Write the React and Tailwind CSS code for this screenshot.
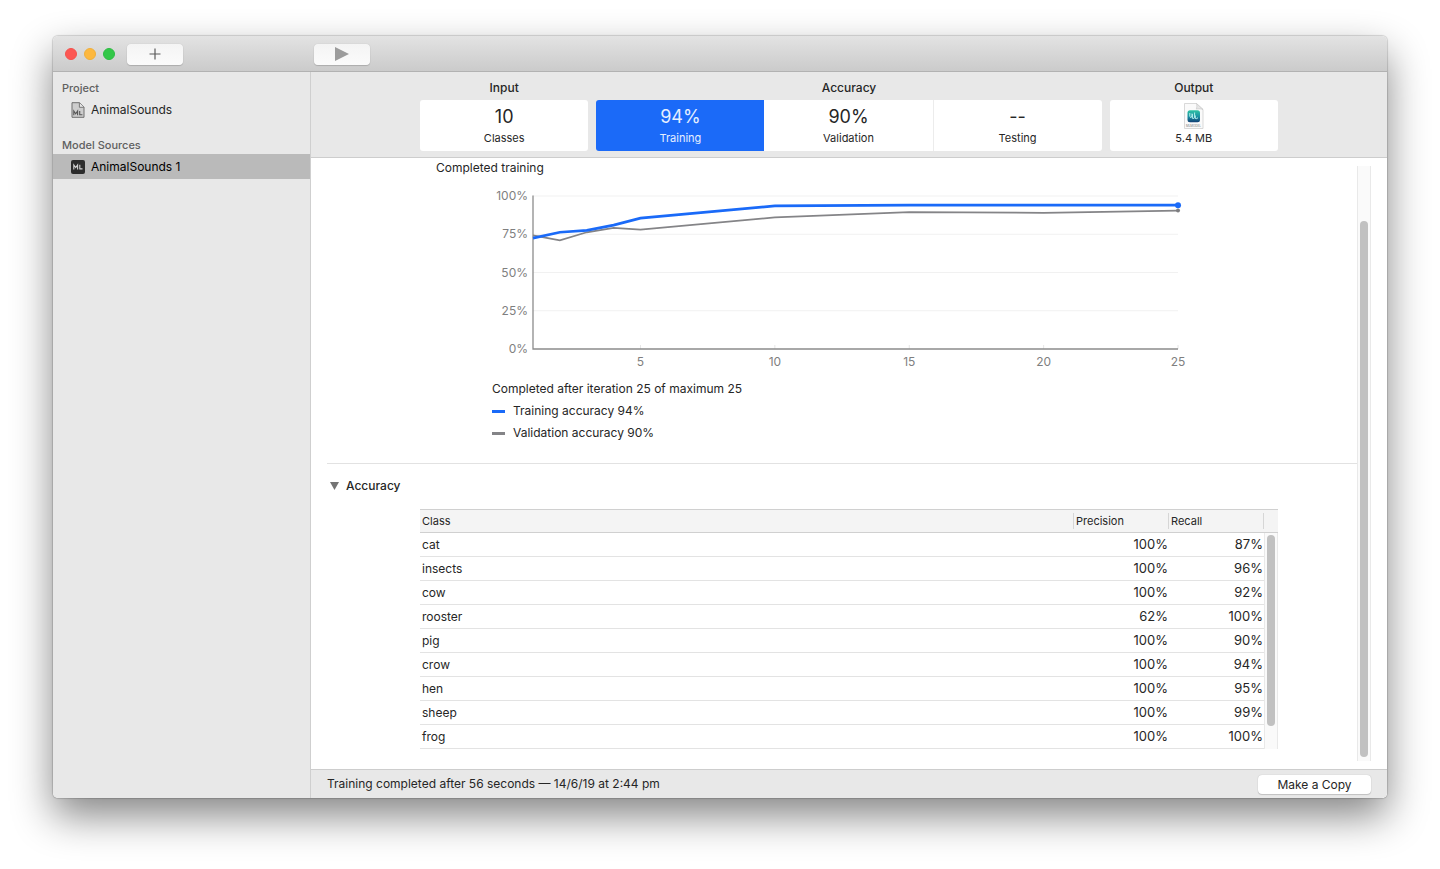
import React, { useState } from "react";

const trainingData = [
  [1, 72.5],
  [2, 76.3],
  [3, 77.5],
  [4, 81],
  [5, 85.5],
  [10, 93.5],
  [15, 94],
  [20, 94],
  [25, 94],
];

const validationData = [
  [1, 74.3],
  [2, 71],
  [3, 76.3],
  [4, 79.2],
  [5, 78],
  [10, 86],
  [15, 89.5],
  [20, 89],
  [25, 90.5],
];

const classes = [
  { name: "cat", precision: "100%", recall: "87%" },
  { name: "insects", precision: "100%", recall: "96%" },
  { name: "cow", precision: "100%", recall: "92%" },
  { name: "rooster", precision: "62%", recall: "100%" },
  { name: "pig", precision: "100%", recall: "90%" },
  { name: "crow", precision: "100%", recall: "94%" },
  { name: "hen", precision: "100%", recall: "95%" },
  { name: "sheep", precision: "100%", recall: "99%" },
  { name: "frog", precision: "100%", recall: "100%" },
];

const chartX = (i) => 41 + ((i - 1) * 645) / 24;
const chartY = (v) => 161 - (v * 153) / 100;
const toPoints = (data) => data.map(([i, v]) => `${chartX(i)},${chartY(v)}`).join(" ");

const DocumentIcon = () => (
  <svg className="h-4 w-[14px] shrink-0" viewBox="0 0 14 16" aria-hidden="true">
    <path d="M1 .7h7.6L13 5.1v10.2H1z" fill="#cdcdcd" stroke="#6e6e6e" strokeWidth="1" strokeLinejoin="round" />
    <path d="M8.4.8v4.5h4.5" fill="#e6e6e6" stroke="#6e6e6e" strokeWidth=".9" />
    <path d="M2.8 13.2V9l1.9 2.7L6.6 9v4.2M8.7 9v3.8h2.7" fill="none" stroke="#555" strokeWidth="1.1" />
  </svg>
);

const SourceIcon = () => (
  <svg className="h-[14px] w-[14px] shrink-0" viewBox="0 0 14 14" aria-hidden="true">
    <rect width="14" height="14" rx="2" fill="#2c2c2c" />
    <path d="M2.8 9.4V5l1.9 2.6L6.6 5v4.4M8.8 4.8v4.1h2.7" fill="none" stroke="#d2d2d2" strokeWidth="1.1" />
  </svg>
);

const ModelFileIcon = () => (
  <svg className="h-[26px] w-5" viewBox="0 0 20 26" aria-hidden="true">
    <defs>
      <linearGradient id="tile" x1="0" y1="0" x2="0" y2="1">
        <stop offset="0" stopColor="#2fc4a4" />
        <stop offset=".55" stopColor="#1b8fa3" />
        <stop offset="1" stopColor="#123f74" />
      </linearGradient>
    </defs>
    <path d="M.5 .5h12l6.5 6v19H.5z" fill="#fafafa" stroke="#cfcfcf" strokeWidth=".8" />
    <path d="M12.5.5c.6 2 .3 4-.2 5.6 2-.5 4.7-.4 6.7.4z" fill="#e6e6e6" stroke="#c4c4c4" strokeWidth=".6" />
    <rect x="3.5" y="7.2" width="12.5" height="12" rx="2.5" fill="url(#tile)" />
    <path d="M5.8 10v3.5q1.2 2.5 2.2-.5V10.5M8.4 11v4.3q1.6 1.2 2.2-1.3V9.5M11.3 12.5v3q1.5.6 2.7-.8" fill="none" stroke="#b5f2ec" strokeWidth="1" />
    <text x="9.500" y="24" textAnchor="middle" fontSize="3" fill="#777">MLMODEL</text>
  </svg>
);

const Metric = ({ value, label, className }) => (
  <button type="button" className={`flex h-[51px] flex-1 flex-col items-center pt-[5px] ${className}`}>
    <span className="h-[25px] text-lg leading-6">{value}</span>
    <span className="text-[11px] leading-4">{label}</span>
  </button>
);

const AccuracyChart = () => (
  <svg className="block w-full" viewBox="0 0 700 182" role="img" aria-label="Accuracy by iteration">
    {[25, 50, 75, 100].map((v) => (
      <line key={v} x1="41" x2="686" y1={chartY(v)} y2={chartY(v)} stroke="#f1f1f1" />
    ))}
    {[5, 10, 15, 20, 25].map((i) => (
      <line key={i} x1={chartX(i)} x2={chartX(i)} y1="157" y2="161" stroke="#e6e6e6" />
    ))}
    <path d="M41 7.5V161H686" fill="none" stroke="#8c8c8c" strokeWidth="1.3" />
    <polyline points={toPoints(validationData)} fill="none" stroke="#848487" strokeWidth="1.8" />
    <circle cx={chartX(25)} cy={chartY(90.5)} r="2" fill="#7d7d80" />
    <polyline points={toPoints(trainingData)} fill="none" stroke="#1a6af8" strokeWidth="2.7" />
    <circle cx={chartX(25)} cy={chartY(94)} r="3" fill="#1a6af8" />
    <g fontSize="12" fill="#7f7f7f">
      {[0, 25, 50, 75, 100].map((v) => (
        <text key={v} x="36" y={chartY(v) + 4} textAnchor="end">{`${v}%`}</text>
      ))}
      {[5, 10, 15, 20, 25].map((i) => (
        <text key={i} x={chartX(i)} y="178" textAnchor="middle">{i}</text>
      ))}
    </g>
  </svg>
);

const Scrollbar = ({ thumb }) => (
  <div className="flex w-[14px] flex-1 justify-center border-x border-[#e9e9e9] bg-[#fafafa]">
    <div className={`w-2 rounded-full bg-[#c1c1c1] ${thumb}`} />
  </div>
);

const ClassTable = () => (
  <div className="flex">
    <table className="flex-1 table-fixed border-collapse text-left">
      <thead>
        <tr className="h-[23px] border-y border-[#d0d0d0] bg-[#f4f4f4] text-[11px]">
          <th className="p-0 pl-[2px] font-normal">Class</th>
          <th className="w-[95px] p-0 font-normal">
            <div className="border-l border-[#d6d6d6] pl-[2px] leading-4">Precision</div>
          </th>
          <th className="w-24 p-0 font-normal">
            <div className="border-x border-[#d6d6d6] pl-[2px] leading-4">Recall</div>
          </th>
        </tr>
      </thead>
      <tbody className="text-[13px]">
        {classes.map((row) => (
          <tr key={row.name} className="h-6 border-b border-[#e3e3e3]">
            <td className="p-0 pl-[2px] text-xs">{row.name}</td>
            <td className="p-0 text-right">{row.precision}</td>
            <td className="p-0 pr-px text-right">{row.recall}</td>
          </tr>
        ))}
      </tbody>
    </table>
    <div className="flex flex-col">
      <div className="h-6 border-y border-[#d0d0d0] bg-[#f4f4f4]" />
      <Scrollbar thumb="mt-[2px] mb-[23px]" />
    </div>
  </div>
);

const TitleBar = () => (
  <header className="flex h-9 shrink-0 items-center border-b border-[#b2b2b2] bg-gradient-to-b from-[#e3e3e3] to-[#cbcbcb] pt-px">
    <div className="flex w-[261px] shrink-0 items-center gap-[7px] pl-3">
      <button type="button" aria-label="Close" className="size-3 rounded-full border border-[#f4524d] bg-[#fc5753]" />
      <button type="button" aria-label="Minimize" className="size-3 rounded-full border border-[#f0af3a] bg-[#fdb83f]" />
      <button type="button" aria-label="Zoom" className="size-3 rounded-full border border-[#2dbd43] bg-[#33c748]" />
      <button
        type="button"
        aria-label="Add"
        className="ml-[5px] flex h-[21px] w-14 items-center justify-center rounded-[4px] bg-gradient-to-b from-[#f4f4f4] to-[#fbfbfb] shadow-[0_0_1px_rgba(0,0,0,0.2),0_1px_1px_rgba(0,0,0,0.15)]"
      >
        <svg className="size-3" viewBox="0 0 12 12" aria-hidden="true">
          <path d="M6 .5v11M.5 6h11" stroke="#5a5a5a" strokeWidth="1.2" />
        </svg>
      </button>
    </div>
    <button
      type="button"
      aria-label="Train"
      className="flex h-[21px] w-14 items-center justify-center rounded-[4px] bg-gradient-to-b from-[#f4f4f4] to-[#fbfbfb] shadow-[0_0_1px_rgba(0,0,0,0.2),0_1px_1px_rgba(0,0,0,0.15)]"
    >
      <svg className="size-[14px]" viewBox="0 0 14 14" aria-hidden="true">
        <path d="M0 0l14 7-14 7z" fill="#9c9c9c" />
      </svg>
    </button>
  </header>
);

const Sidebar = () => (
  <nav className="w-[258px] shrink-0 border-r border-[#cfcfcf] bg-[#e8e8e8] pt-2">
    <h2 className="mb-px pl-[9px] text-[11px] leading-4 font-medium text-[#606060]">Project</h2>
    <a href="#project" className="mb-[15px] flex h-[25px] items-center gap-[6px] pl-[18px]">
      <DocumentIcon />
      AnimalSounds
    </a>
    <h2 className="mb-px pl-[9px] text-[11px] leading-4 font-medium text-[#606060]">Model Sources</h2>
    <a href="#source" aria-current="page" className="flex h-[25px] items-center gap-[6px] bg-[#bababa] pl-[18px] text-black">
      <SourceIcon />
      AnimalSounds 1
    </a>
  </nav>
);

const Summary = () => (
  <section className="border-b border-[#cdcdcd] bg-[#e8e8e8] px-4 pt-2 pb-[6px]">
    <div className="mx-auto flex max-w-[858px] gap-2 text-center">
      <div className="flex-1">
        <h3 className="mb-1 leading-4 font-medium">Input</h3>
        <div className="flex">
          <Metric value="10" label="Classes" className="rounded-[3px] bg-white" />
        </div>
      </div>
      <div className="flex-[3]">
        <h3 className="mb-1 leading-4 font-medium">Accuracy</h3>
        <div className="flex overflow-hidden rounded-[3px]">
          <Metric value="94%" label="Training" className="bg-[#1b6af8] text-[#e6efff]" />
          <Metric value="90%" label="Validation" className="bg-white" />
          <Metric value="--" label="Testing" className="border-l border-[#ececec] bg-white" />
        </div>
      </div>
      <div className="flex-1">
        <h3 className="mb-1 leading-4 font-medium">Output</h3>
        <button type="button" className="flex h-[51px] w-full flex-col items-center rounded-[3px] bg-white pt-[3px]">
          <ModelFileIcon />
          <span className="mt-px text-[11px] leading-4">5.4 MB</span>
        </button>
      </div>
    </div>
  </section>
);

const App = () => {
  const [open, setOpen] = useState(true);

  return (
    <div className="flex min-h-screen flex-col bg-white px-[53px] pt-9 pb-[71px] font-['Inter','Liberation_Sans',sans-serif] text-xs text-[#262626]">
      <div className="flex flex-1 flex-col rounded-[5px] shadow-[0_0_1px_1px_rgba(0,0,0,0.15),0_18px_40px_rgba(0,0,0,0.48)]">
        <div className="flex flex-1 flex-col overflow-hidden rounded-[5px]">
          <TitleBar />
          <div className="flex flex-1">
            <Sidebar />
            <div className="flex min-w-0 flex-1 flex-col bg-white">
              <Summary />
              <main className="flex flex-1 px-4">
                <div className="min-w-0 flex-1">
                  <p className="pl-[109px] leading-5">Completed training</p>
                  <div className="mt-[10px] px-[165px]">
                    <AccuracyChart />
                    <div className="mt-2 leading-[22px]">
                      <p>Completed after iteration 25 of maximum 25</p>
                      <p className="flex items-center gap-2">
                        <span className="h-[3px] w-[13px] bg-[#1a6af8]" />
                        Training accuracy 94%
                      </p>
                      <p className="flex items-center gap-2">
                        <span className="h-[3px] w-[13px] bg-[#848487]" />
                        Validation accuracy 90%
                      </p>
                    </div>
                  </div>
                  <div className="mt-[19px] border-t border-[#e2e2e2] pt-3">
                    <button
                      type="button"
                      aria-expanded={open}
                      onClick={() => setOpen(!open)}
                      className="flex h-5 items-center gap-[7px] pl-[3px] font-medium"
                    >
                      <svg className="h-2 w-[9px]" viewBox="0 0 9 8" aria-hidden="true">
                        <path d="M0 0h9L4.5 8z" fill="#747474" />
                      </svg>
                      Accuracy
                    </button>
                    {open && (
                      <div className="mt-[13px] pr-[79px] pl-[93px]">
                        <ClassTable />
                      </div>
                    )}
                  </div>
                </div>
                <div className="flex flex-col py-2">
                  <Scrollbar thumb="mt-[55px] mb-1" />
                </div>
              </main>
              <footer className="flex h-[29px] shrink-0 items-center justify-between border-t border-[#cdcdcd] bg-[#e8e8e8] px-4">
                <p>Training completed after 56 seconds — 14/6/19 at 2:44 pm</p>
                <button
                  type="button"
                  className="h-[19px] w-[113px] rounded-[4px] bg-white leading-[19px] shadow-[0_0_1px_rgba(0,0,0,0.25),0_1px_1px_rgba(0,0,0,0.15)]"
                >
                  Make a Copy
                </button>
              </footer>
            </div>
          </div>
        </div>
      </div>
    </div>
  );
};

export default App;
